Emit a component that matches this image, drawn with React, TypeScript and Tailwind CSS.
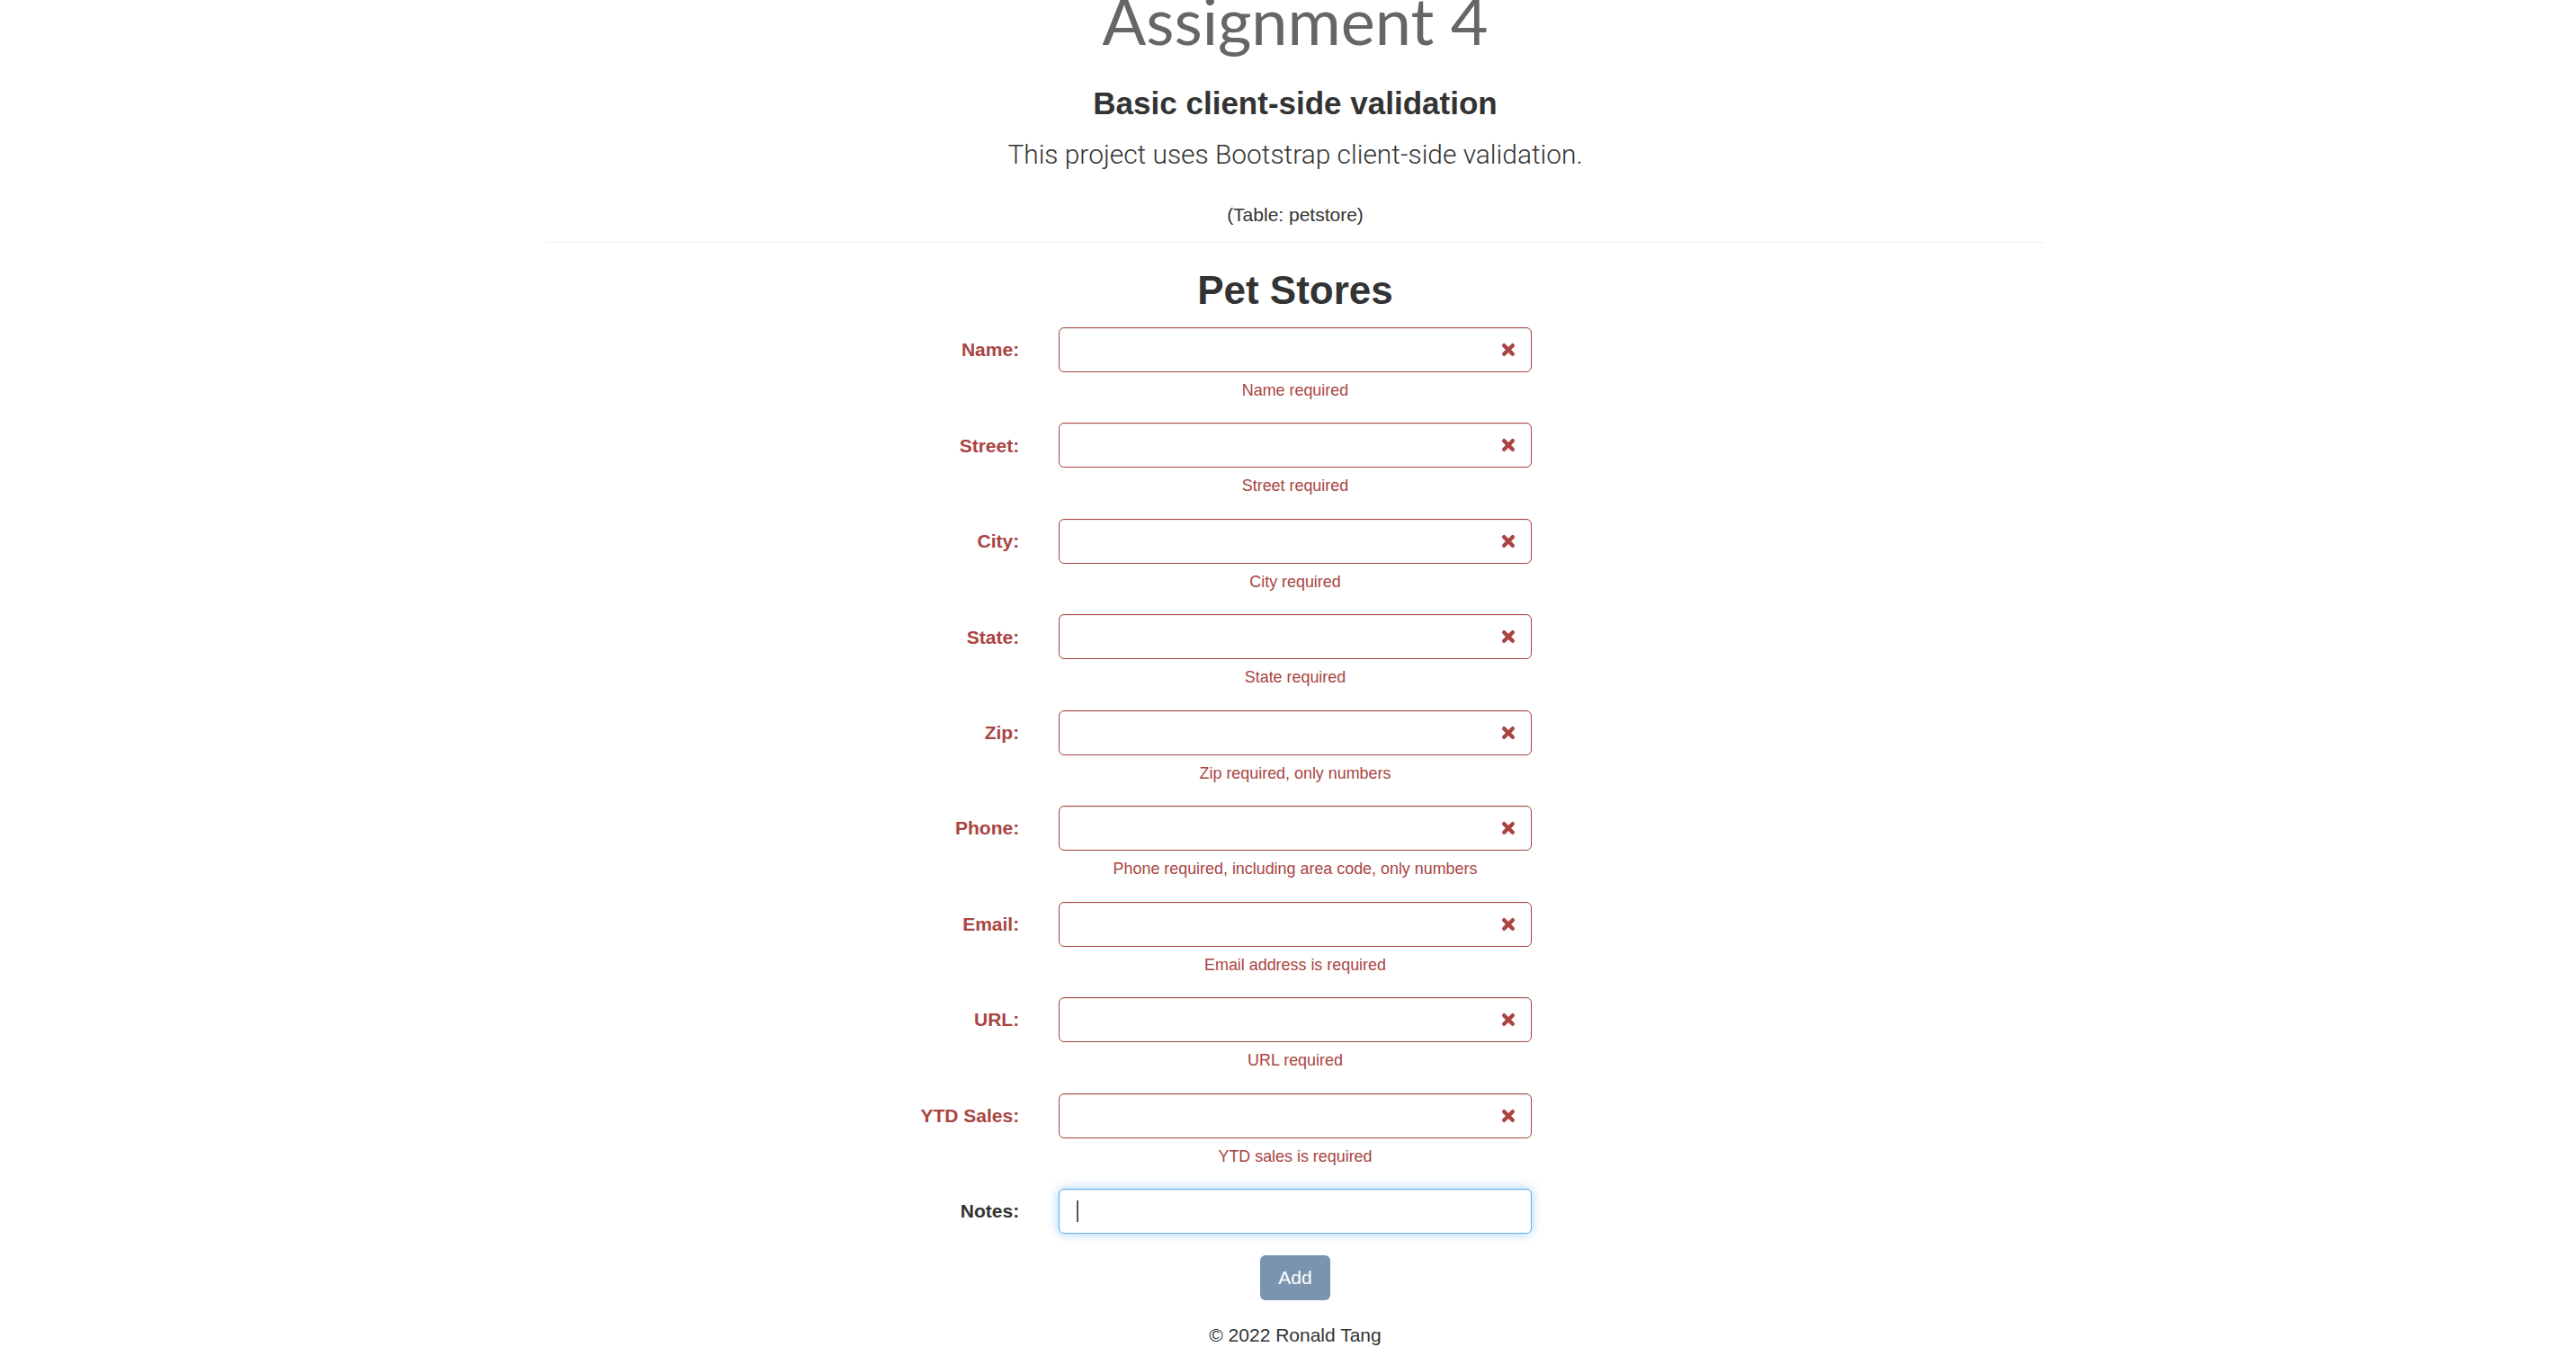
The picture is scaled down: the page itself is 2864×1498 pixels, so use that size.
const fields = [
  { label: 'Name:', error: 'Name required' },
  { label: 'Street:', error: 'Street required' },
  { label: 'City:', error: 'City required' },
  { label: 'State:', error: 'State required' },
  { label: 'Zip:', error: 'Zip required, only numbers' },
  { label: 'Phone:', error: 'Phone required, including area code, only numbers' },
  { label: 'Email:', error: 'Email address is required' },
  { label: 'URL:', error: 'URL required' },
  { label: 'YTD Sales:', error: 'YTD sales is required' },
]

const RemoveIcon = () => (
  <svg width="16" height="16" viewBox="0 0 16 16" className="shrink-0">
    <path
      d="M3.2 3.2 L12.8 12.8 M12.8 3.2 L3.2 12.8"
      stroke="#a94442"
      strokeWidth="4.4"
      strokeLinecap="round"
      fill="none"
    />
  </svg>
)

const InvalidRow = ({ label, error }: { label: string; error: string }) => (
  <div className="grid grid-cols-3 pb-[23.45px]">
    <label className="px-[22px] h-[50px] flex items-center justify-end text-[21px] font-bold text-[#a94442]">
      {label}
    </label>
    <div className="px-[22px] flex flex-col">
      <div className="h-[50px] rounded-[6px] border border-[#a94442] bg-white shadow-[inset_0_1px_1px_rgba(0,0,0,0.075)] flex items-center justify-end pr-[17px]">
        <RemoveIcon />
      </div>
      <p className="mt-[8px] h-[25px] leading-[25px] text-center text-[17.9px] text-[#a94442]">
        {error}
      </p>
    </div>
  </div>
)

export default function App() {
  return (
    <div className="min-h-screen bg-white pl-4 overflow-hidden font-['Liberation_Sans',Arial,sans-serif] text-[#333]">
      <div className="w-[1709px] mx-auto px-[22px] flex flex-col items-center">
        {/* page is scrolled a little, so the title is cut at the top */}
        <h1 className="-mt-[10px] h-[64px] leading-[64px] text-[72px] text-[#666] font-['Lato',sans-serif]">
          Assignment 4
        </h1>
        <h3 className="mt-[41px] h-[40px] leading-[40px] text-[35px] font-bold">
          Basic client-side validation
        </h3>
        <p className="mt-[17px] h-[40px] leading-[40px] text-[29.9px] font-light font-['Roboto',sans-serif]">
          This project uses Bootstrap client-side validation.
        </p>
        <p className="mt-[33px] h-[28px] leading-[28px] text-[21px]">(Table: petstore)</p>
        <hr className="mt-[16px] w-full border-0 border-t border-[#eee]" />
        <h2 className="mt-[28px] h-[50px] leading-[50px] text-[44px] font-bold">Pet Stores</h2>

        <form className="mt-[16px] w-[1709px] flex flex-col">
          {fields.map((f) => (
            <InvalidRow key={f.label} label={f.label} error={f.error} />
          ))}
          <div className="grid grid-cols-3">
            <label className="px-[22px] h-[50px] flex items-center justify-end text-[21px] font-bold text-[#333]">
              Notes:
            </label>
            <div className="px-[22px]">
              <div className="h-[50px] rounded-[6px] border border-[#66afe9] bg-white shadow-[inset_0_1px_1px_rgba(0,0,0,0.075),0_0_12px_rgba(102,175,233,0.6)] flex items-center pl-[19px]">
                <span className="w-[2px] h-[24px] bg-[#555]" />
              </div>
            </div>
          </div>
          <div className="mt-[24px] flex justify-center">
            <button
              type="button"
              className="w-[78px] h-[50px] rounded-[6px] bg-[#7a94af] text-white text-[21px]"
            >
              Add
            </button>
          </div>
        </form>

        <footer className="mt-[25px] h-[28px] leading-[28px] text-[21px] text-[#333]">
          © 2022 Ronald Tang
        </footer>
      </div>
    </div>
  )
}
